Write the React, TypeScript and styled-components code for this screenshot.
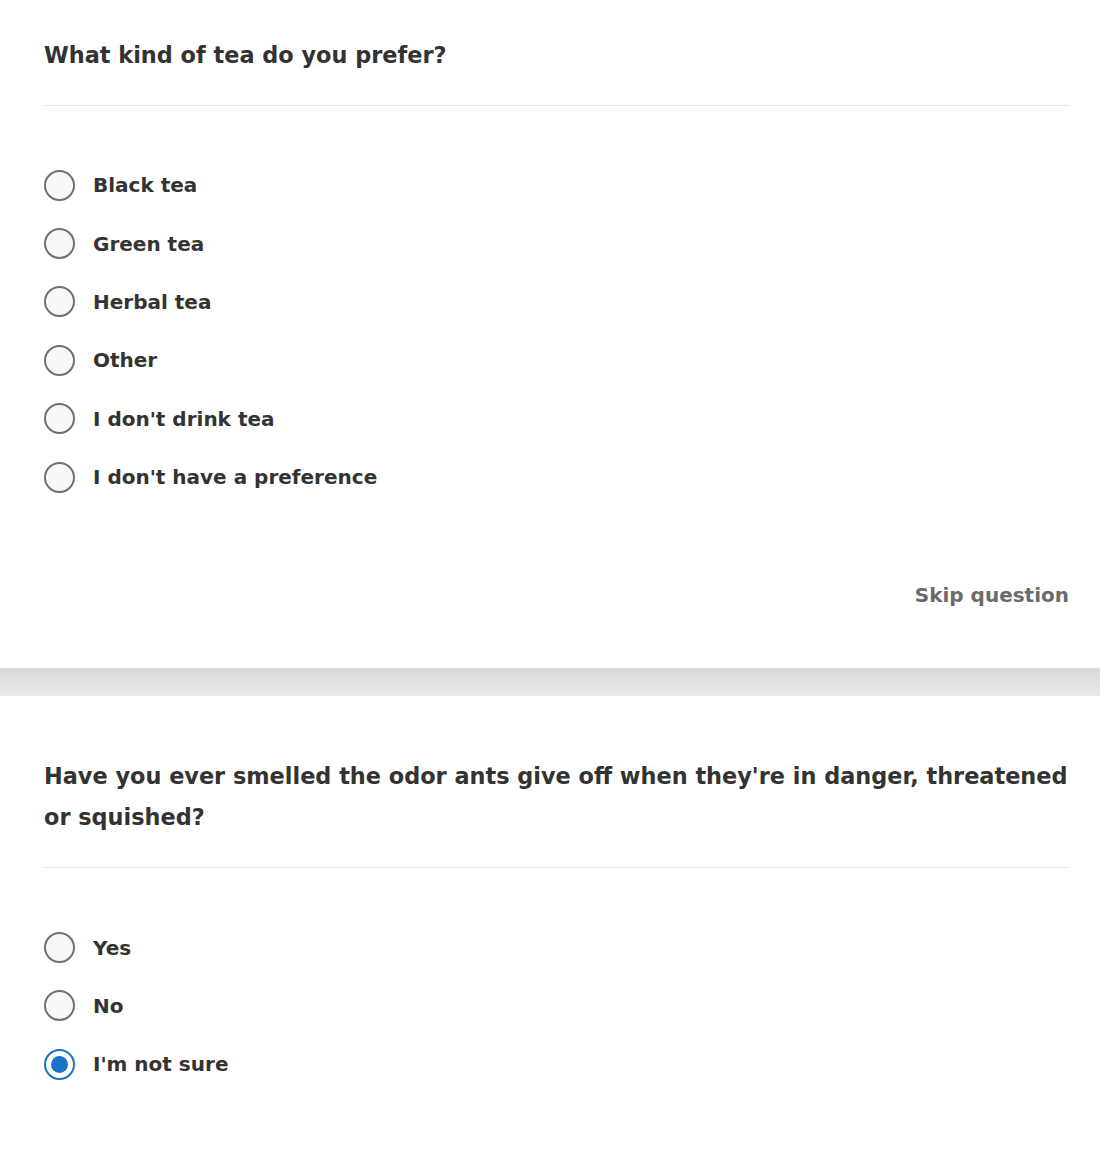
import React, { useState } from "react";
import styled, { createGlobalStyle } from "styled-components";

const Global = createGlobalStyle`
  html, body { margin: 0; padding: 0; background: #ffffff; }
  body { font-family: "DejaVu Sans", "Open Sans", sans-serif; color: #333333; }
  * { box-sizing: border-box; }
`;

const Page = styled.div`
  width: 1100px;
  display: flex;
  flex-direction: column;
`;

const Card = styled.section<{ $top: number; $bottom: number }>`
  background: #ffffff;
  padding: ${(p) => p.$top}px 31px ${(p) => p.$bottom}px 44px;
  display: flex;
  flex-direction: column;
`;

const Title = styled.h2`
  margin: 0;
  font-size: 22.4px;
  line-height: 41px;
  font-weight: 700;
  color: #333333;
`;

const Divider = styled.hr`
  margin: 29px 0 50px 0;
  border: 0;
  height: 1px;
  background: #e6e6e6;
`;

const Options = styled.div`
  display: flex;
  flex-direction: column;
`;

const Row = styled.label`
  height: 58.4px;
  display: flex;
  align-items: center;
  gap: 18px;
  cursor: pointer;
`;

const Circle = styled.span<{ $on: boolean }>`
  width: 31px;
  height: 31px;
  border-radius: 50%;
  flex: none;
  display: flex;
  align-items: center;
  justify-content: center;
  border: 2px solid ${(p) => (p.$on ? "#1b72c9" : "#707070")};
  background: ${(p) => (p.$on ? "#ffffff" : "#f7f8fa")};
`;

const Dot = styled.span`
  width: 17px;
  height: 17px;
  border-radius: 50%;
  background: #1b72c9;
`;

const OptionText = styled.span`
  font-size: 20px;
  font-weight: 700;
  color: #333333;
`;

const SkipRow = styled.div`
  display: flex;
  justify-content: flex-end;
  margin-top: 75px;
`;

const Skip = styled.button`
  border: 0;
  background: none;
  padding: 0;
  font-family: inherit;
  font-size: 20px;
  font-weight: 700;
  color: #6b6b6b;
  line-height: 28px;
  cursor: pointer;
`;

const Band = styled.div`
  height: 28px;
  background: linear-gradient(#d7d7d9, #ebebed);
`;

type Q = { title: string; options: string[]; initial: number | null };

function Question({
  q,
  top,
  bottom,
  skip,
}: {
  q: Q;
  top: number;
  bottom: number;
  skip?: boolean;
}) {
  const [sel, setSel] = useState<number | null>(q.initial);
  return (
    <Card $top={top} $bottom={bottom}>
      <Title>{q.title}</Title>
      <Divider />
      <Options>
        {q.options.map((o, i) => (
          <Row key={o} onClick={() => setSel(i)}>
            <Circle $on={sel === i}>{sel === i && <Dot />}</Circle>
            <OptionText>{o}</OptionText>
          </Row>
        ))}
      </Options>
      {skip && (
        <SkipRow>
          <Skip>Skip question</Skip>
        </SkipRow>
      )}
    </Card>
  );
}

export default function App() {
  return (
    <Page>
      <Global />
      <Question
        top={35}
        bottom={59}
        skip
        q={{
          title: "What kind of tea do you prefer?",
          options: [
            "Black tea",
            "Green tea",
            "Herbal tea",
            "Other",
            "I don't drink tea",
            "I don't have a preference",
          ],
          initial: null,
        }}
      />
      <Band />
      <Question
        top={60}
        bottom={58}
        q={{
          title:
            "Have you ever smelled the odor ants give off when they're in danger, threatened or squished?",
          options: ["Yes", "No", "I'm not sure"],
          initial: 2,
        }}
      />
    </Page>
  );
}
